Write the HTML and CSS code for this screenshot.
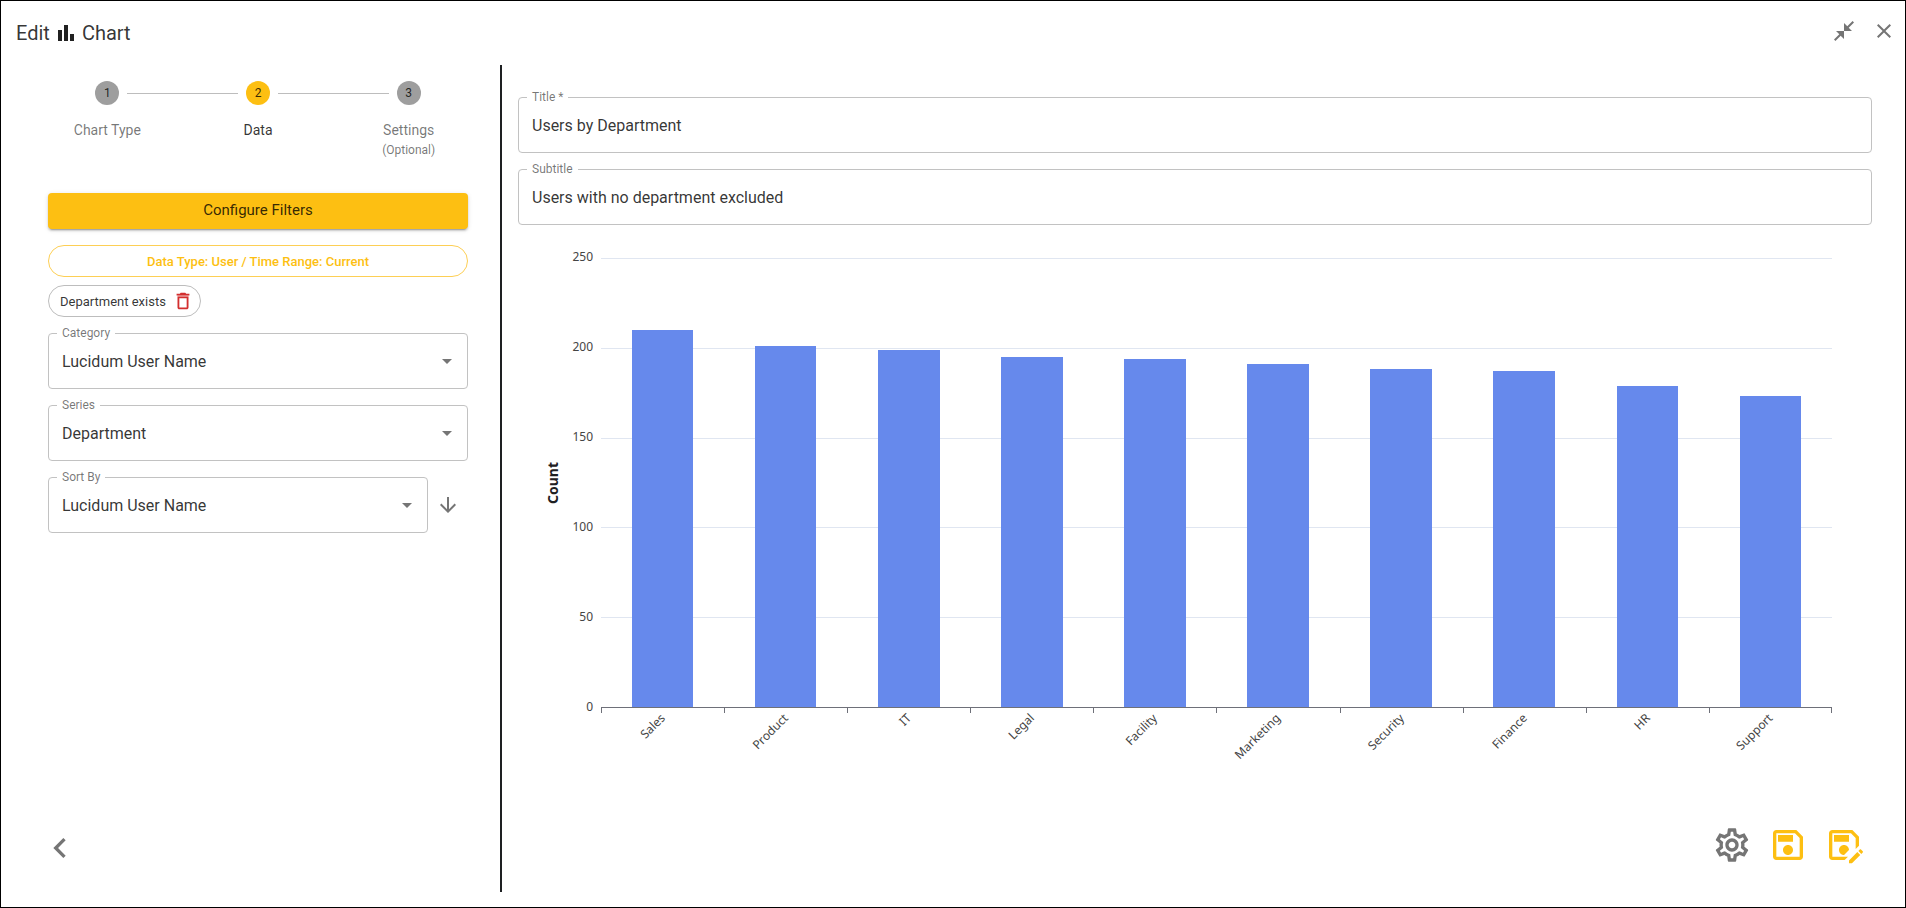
FILE: index.html
```html
<!DOCTYPE html>
<html lang="en">
<head>
<meta charset="utf-8">
<meta name="viewport" content="width=device-width, initial-scale=1">
<title>Edit Chart</title>
<link rel="stylesheet" href="styles.css">
</head>
<body>
<main class="dialog">
  <header class="dialog-header">
    <h1 class="dialog-title">
      <span>Edit</span>
      <svg class="icon" viewBox="0 0 24 24" aria-hidden="true"><path d="M4 9h4v11H4zm12 4h4v7h-4zm-6-9h4v16h-4z"/></svg>
      <span>Chart</span>
    </h1>
    <div class="header-actions">
      <button class="icon-button" type="button" aria-label="Exit full screen"><svg class="icon" viewBox="0 0 24 24"><path d="M22 3.41 16.71 8.7 20 12h-8V4l3.29 3.29L20.59 2 22 3.41zM3.41 22l5.29-5.29L12 20v-8H4l3.29 3.29L2 20.59 3.41 22z"/></svg></button>
      <button class="icon-button" type="button" aria-label="Close"><svg class="icon" viewBox="0 0 24 24"><path d="M19 6.41 17.59 5 12 10.59 6.41 5 5 6.41 10.59 12 5 17.59 6.41 19 12 13.41 17.59 19 19 17.59 13.41 12z"/></svg></button>
    </div>
  </header>

  <div class="dialog-body">
    <section class="side">
      <ol class="stepper">
        <li class="step"><span class="step-number">1</span><span class="step-label">Chart Type</span></li>
        <li class="step step-active"><span class="step-number">2</span><span class="step-label">Data</span></li>
        <li class="step"><span class="step-number">3</span><span class="step-label">Settings</span><span class="step-note">(Optional)</span></li>
      </ol>

      <form class="side-form">
        <button class="primary-button" type="button">Configure Filters</button>
        <div class="chips">
          <div class="chip chip-primary">Data Type: User / Time Range: Current</div>
          <div class="chip chip-filter">
            <span>Department exists</span>
            <button class="icon-button chip-delete" type="button" aria-label="Remove filter"><svg class="icon icon-small" viewBox="0 0 24 24"><path d="M6 19c0 1.1.9 2 2 2h8c1.1 0 2-.9 2-2V7H6v12zM8 9h8v10H8V9zm7.5-5-1-1h-5l-1 1H5v2h14V4z"/><path class="lid" d="M6 6h12v1H6z"/></svg></button>
          </div>
        </div>
        <div class="field">
          <label class="field-label" for="category">Category</label>
          <select class="field-input" id="category"><option>Lucidum User Name</option></select>
          <svg class="icon field-arrow" viewBox="0 0 24 24" aria-hidden="true"><path d="m7 10 5 5 5-5z"/></svg>
        </div>
        <div class="field">
          <label class="field-label" for="series">Series</label>
          <select class="field-input" id="series"><option>Department</option></select>
          <svg class="icon field-arrow" viewBox="0 0 24 24" aria-hidden="true"><path d="m7 10 5 5 5-5z"/></svg>
        </div>
        <div class="sort-row">
          <div class="field">
            <label class="field-label" for="sort">Sort By</label>
            <select class="field-input" id="sort"><option>Lucidum User Name</option></select>
            <svg class="icon field-arrow" viewBox="0 0 24 24" aria-hidden="true"><path d="m7 10 5 5 5-5z"/></svg>
          </div>
          <button class="icon-button sort-button" type="button" aria-label="Sort descending"><svg class="icon" viewBox="0 0 24 24"><path d="m20 12-1.41-1.41L13 16.17V4h-2v12.17l-5.58-5.59L4 12l8 8 8-8z"/></svg></button>
        </div>
      </form>

      <button class="icon-button back-button" type="button" aria-label="Back"><svg class="icon icon-large" viewBox="0 0 24 24"><path d="M15.41 7.41 14 6l-6 6 6 6 1.41-1.41L10.83 12z"/></svg></button>
    </section>

    <section class="preview">
      <div class="preview-fields">
        <div class="field">
          <label class="field-label" for="title">Title *</label>
          <input class="field-input" id="title" type="text" value="Users by Department">
        </div>
        <div class="field">
          <label class="field-label" for="subtitle">Subtitle</label>
          <input class="field-input" id="subtitle" type="text" value="Users with no department excluded">
        </div>
      </div>

      <div class="chart">
        <div class="axis-title"><span>Count</span></div>
        <div class="y-axis"><span>250</span><span>200</span><span>150</span><span>100</span><span>50</span><span>0</span></div>
        <div class="plot">
          <div class="grid-lines"><i></i><i></i><i></i><i></i><i></i></div>
          <div class="bars">
            <div class="bar" style="height:84%"></div>
            <div class="bar" style="height:80.4%"></div>
            <div class="bar" style="height:79.6%"></div>
            <div class="bar" style="height:78%"></div>
            <div class="bar" style="height:77.6%"></div>
            <div class="bar" style="height:76.4%"></div>
            <div class="bar" style="height:75.2%"></div>
            <div class="bar" style="height:74.8%"></div>
            <div class="bar" style="height:71.6%"></div>
            <div class="bar" style="height:69.2%"></div>
          </div>
        </div>
        <div class="x-axis">
          <div class="category"><span>Sales</span></div>
          <div class="category"><span>Product</span></div>
          <div class="category"><span>IT</span></div>
          <div class="category"><span>Legal</span></div>
          <div class="category"><span>Facility</span></div>
          <div class="category"><span>Marketing</span></div>
          <div class="category"><span>Security</span></div>
          <div class="category"><span>Finance</span></div>
          <div class="category"><span>HR</span></div>
          <div class="category"><span>Support</span></div>
        </div>
      </div>

      <div class="preview-actions">
        <button class="icon-button" type="button" aria-label="Settings"><svg class="icon icon-large" viewBox="0 0 24 24"><path d="M19.43 12.98c.04-.32.07-.64.07-.98 0-.34-.03-.66-.07-.98l2.11-1.65c.19-.15.24-.42.12-.64l-2-3.46c-.09-.16-.26-.25-.44-.25-.06 0-.12.01-.17.03l-2.49 1c-.52-.4-1.08-.73-1.69-.98l-.38-2.65C14.46 2.18 14.25 2 14 2h-4c-.25 0-.46.18-.49.42l-.38 2.65c-.61.25-1.17.59-1.69.98l-2.49-1c-.06-.02-.12-.03-.18-.03-.17 0-.34.09-.43.25l-2 3.46c-.13.22-.07.49.12.64l2.11 1.65c-.04.32-.07.65-.07.98 0 .33.03.66.07.98l-2.11 1.65c-.19.15-.24.42-.12.64l2 3.46c.09.16.26.25.44.25.06 0 .12-.01.17-.03l2.49-1c.52.4 1.08.73 1.69.98l.38 2.65c.03.24.24.42.49.42h4c.25 0 .46-.18.49-.42l.38-2.65c.61-.25 1.17-.59 1.69-.98l2.49 1c.06.02.12.03.18.03.17 0 .34-.09.43-.25l2-3.46c.12-.22.07-.49-.12-.64l-2.11-1.65zm-1.98-1.71c.04.31.05.52.05.73 0 .21-.02.43-.05.73l-.14 1.13.89.7 1.08.84-.7 1.21-1.27-.51-1.04-.42-.9.68c-.43.32-.84.56-1.25.73l-1.06.43-.16 1.13-.2 1.35h-1.4l-.19-1.35-.16-1.13-1.06-.43c-.43-.18-.83-.41-1.23-.71l-.91-.7-1.06.43-1.27.51-.7-1.21 1.08-.84.89-.7-.14-1.13c-.03-.31-.05-.54-.05-.74s.02-.43.05-.73l.14-1.13-.89-.7-1.08-.84.7-1.21 1.27.51 1.04.42.9-.68c.43-.32.84-.56 1.25-.73l1.06-.43.16-1.13.2-1.35h1.39l.19 1.35.16 1.13 1.06.43c.43.18.83.41 1.23.71l.91.7 1.06-.43 1.27-.51.7 1.21-1.07.85-.89.7.14 1.13zM12 8c-2.21 0-4 1.79-4 4s1.79 4 4 4 4-1.79 4-4-1.79-4-4-4zm0 6c-1.1 0-2-.9-2-2s.9-2 2-2 2 .9 2 2-.9 2-2 2z"/></svg></button>
        <button class="icon-button accent" type="button" aria-label="Save"><svg class="icon icon-large" viewBox="0 0 24 24"><path d="M17 3H5c-1.11 0-2 .9-2 2v14c0 1.1.89 2 2 2h14c1.1 0 2-.9 2-2V7l-4-4zm2 16H5V5h11.17L19 7.83V19zm-7-7c-1.66 0-3 1.34-3 3s1.34 3 3 3 3-1.34 3-3-1.34-3-3-3zM6 6h9v4H6z"/></svg></button>
        <button class="icon-button accent" type="button" aria-label="Save as"><svg class="icon icon-large" viewBox="0 0 24 24"><path d="M21 12.4V7l-4-4H5c-1.11 0-2 .9-2 2v14c0 1.1.89 2 2 2h7.4l2-2H5V5h11.17L19 7.83v6.57l2-2zM15 15c0 .02 0 .03-.01.05L12.04 18H12c-1.66 0-3-1.34-3-3s1.34-3 3-3 3 1.34 3 3zM6 6h9v4H6V6zm13.99 10.25 1.77 1.77L16.77 23H15v-1.77l4.99-4.98zm3.26.26-.85.85-1.77-1.77.85-.85c.2-.2.51-.2.71 0l1.06 1.06c.2.2.2.52 0 .71z"/></svg></button>
      </div>
    </section>
  </div>
</main>
</body>
</html>
```
FILE: styles.css
```css
:root {
  --accent: #fdbf12;
  --text: rgba(0, 0, 0, 0.8);
  --muted: rgba(0, 0, 0, 0.54);
  --icon: #757575;
  --outline: #c2c2c2;
}

* { box-sizing: border-box; }

body {
  margin: 0;
  background: #fff;
  color: var(--text);
  font: 16px/24px Roboto, "Liberation Sans", sans-serif;
}

.dialog {
  display: flex;
  flex-direction: column;
  min-height: 100vh;
  padding-bottom: 15px;
  border: 1px solid #000;
}

.dialog-header {
  display: flex;
  align-items: flex-start;
  justify-content: space-between;
  height: 64px;
  padding: 18px 9px 0 15px;
}

.dialog-title {
  display: flex;
  align-items: center;
  gap: 4px;
  margin: 0;
  padding-top: 2px;
  font-size: 20px;
  font-weight: 400;
}

.dialog-title .icon { color: #212121; }

.header-actions { display: flex; gap: 16px; }

.icon { display: block; width: 24px; height: 24px; fill: currentColor; }
.icon-small { width: 22px; height: 22px; }
.icon-large { width: 40px; height: 40px; }

.icon-button {
  padding: 0;
  border: 0;
  background: none;
  color: var(--icon);
  cursor: pointer;
}

.accent { color: var(--accent); }

.dialog-body { display: flex; flex: 1; }

/* Left column: stepper and chart data settings */

.side {
  display: flex;
  flex-direction: column;
  flex: none;
  width: 501px;
  padding: 16px 16px 24px 31px;
  border-right: 2px solid #1e2022;
}

.stepper {
  display: flex;
  margin: 0;
  padding: 0;
  list-style: none;
}

.step {
  position: relative;
  display: flex;
  flex: 1;
  flex-direction: column;
  align-items: center;
}

.step + .step::before {
  content: "";
  position: absolute;
  top: 12px;
  left: calc(-50% + 20px);
  right: calc(50% + 20px);
  border-top: 1px solid #bdbdbd;
}

.step-number {
  width: 24px;
  height: 24px;
  margin-bottom: 15px;
  border-radius: 50%;
  background: #9e9e9e;
  font-size: 12px;
  text-align: center;
}

.step-label { color: var(--muted); font-size: 14px; line-height: 20px; }
.step-note { color: var(--muted); font-size: 12px; line-height: 20px; }
.step-active .step-number { background: var(--accent); }
.step-active .step-label { color: var(--text); }

.side-form {
  display: flex;
  flex-direction: column;
  gap: 16px;
  padding: 33px 16px 0;
}

.primary-button {
  height: 36px;
  padding: 0 16px 2px;
  border: 0;
  border-radius: 4px;
  background: var(--accent);
  box-shadow: 0 3px 1px -2px rgba(0, 0, 0, 0.2), 0 2px 2px rgba(0, 0, 0, 0.14), 0 1px 5px rgba(0, 0, 0, 0.12);
  color: var(--text);
  font: 15px/24px Roboto, sans-serif;
}

.chips {
  display: flex;
  flex-direction: column;
  align-items: flex-start;
  gap: 8px;
}

.chip {
  display: flex;
  align-items: center;
  height: 32px;
  border: 1px solid #bdbdbd;
  border-radius: 16px;
  font-size: 13px;
}

.chip-primary {
  align-self: stretch;
  justify-content: center;
  padding-top: 2px;
  border-color: #fdcf55;
  color: var(--accent);
  font-weight: 500;
}

.chip-filter { gap: 6px; padding: 0 6px 0 11px; }
.chip-filter span { padding-top: 2px; }
.chip-delete { color: #d32f2f; }
.lid { opacity: 0.5; }

.field { position: relative; flex: 1; }

.field-label {
  position: absolute;
  top: -8px;
  left: 9px;
  padding: 0 5px;
  background: #fff;
  color: var(--muted);
  font-size: 12px;
  line-height: 16px;
}

.field-input {
  display: block;
  width: 100%;
  height: 56px;
  padding: 0 13px;
  border: 1px solid var(--outline);
  border-radius: 4px;
  outline: 0;
  appearance: none;
  background: #fff;
  color: var(--text);
  font: inherit;
}

select.field-input { padding: 2px 40px 0 13px; }

.field-arrow {
  position: absolute;
  top: 16px;
  right: 9px;
  color: var(--icon);
  pointer-events: none;
}

.sort-row { display: flex; align-items: center; }
.sort-button { padding: 8px; }
.back-button { align-self: flex-start; margin-top: auto; margin-left: 8px; }

/* Right column: live preview */

.preview {
  display: flex;
  flex: 1;
  flex-direction: column;
  min-width: 0;
  padding: 32px 33px 27px 16px;
}

.preview-fields {
  display: flex;
  flex-direction: column;
  gap: 16px;
}

.chart {
  display: grid;
  flex: 1;
  grid-template-columns: 43px 24px 1fr;
  grid-template-rows: 1fr 72px;
  gap: 0 8px;
  margin: 33px 40px 45px 0;
  color: #444;
  font-family: "Noto Sans", "Open Sans", sans-serif;
  font-size: 12px;
}

.axis-title {
  display: flex;
  align-items: center;
  justify-content: flex-end;
  color: #1e2022;
  font-size: 14px;
  font-weight: 700;
  line-height: 16px;
}

.axis-title span { writing-mode: vertical-rl; transform: rotate(180deg); }

.y-axis {
  display: flex;
  flex-direction: column;
  justify-content: space-between;
  margin: -9px 0 -7px;
  line-height: 16px;
  text-align: right;
}

.plot {
  position: relative;
  display: grid;
  border-bottom: 1px solid #6e7079;
}

.grid-lines { display: grid; grid-template-rows: repeat(5, 1fr); }
.grid-lines i { border-top: 1px solid #e0e6f1; }

.bars {
  position: absolute;
  inset: 0;
  display: flex;
  align-items: flex-end;
  justify-content: space-around;
}

.bar { width: 5%; background: #6689ec; }

.x-axis {
  display: grid;
  grid-column: 3;
  grid-template-columns: repeat(10, 1fr);
  line-height: 16px;
}

.category {
  height: 5px;
  border-left: 1px solid #6e7079;
}

.category:last-child { border-right: 1px solid #6e7079; }

.category span {
  display: block;
  width: 50%;
  text-align: right;
  transform: rotate(-45deg);
  transform-origin: right center;
}

.preview-actions {
  display: flex;
  justify-content: flex-end;
  gap: 16px;
  padding-right: 8px;
}
```
